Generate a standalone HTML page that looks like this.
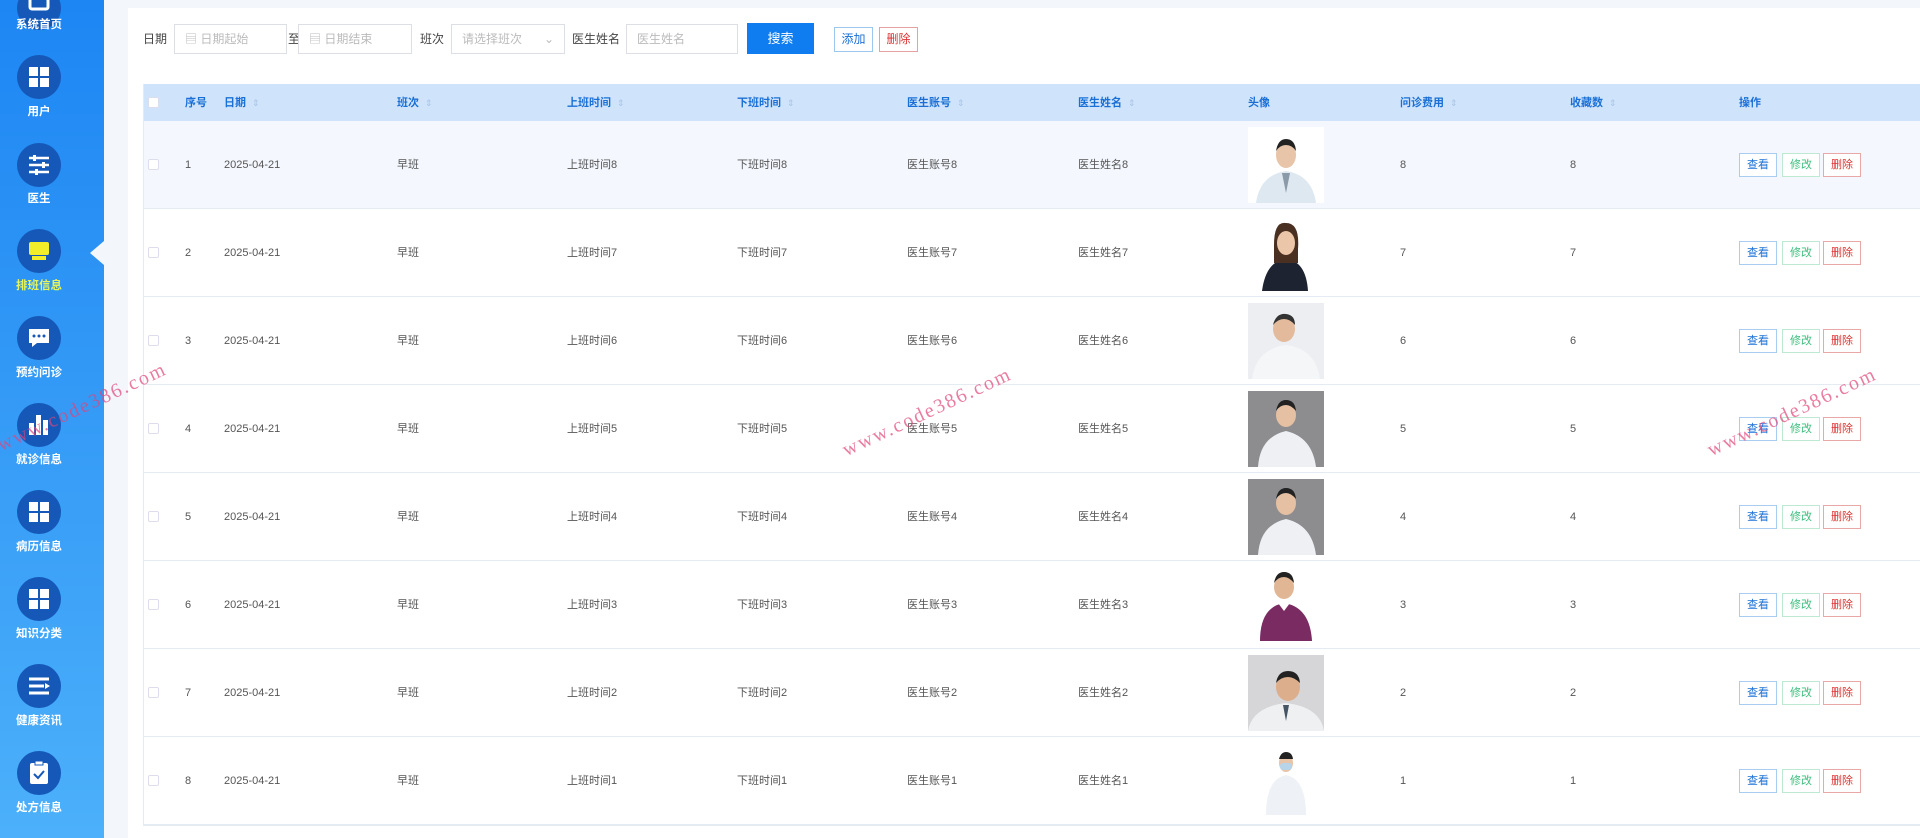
<!DOCTYPE html>
<html><head><meta charset="utf-8">
<style>
*{margin:0;padding:0;box-sizing:border-box}
body{width:1920px;height:838px;overflow:hidden;background:#f3f6fb;font-family:"Liberation Sans","Noto Sans CJK SC",sans-serif;font-size:12px;line-height:14px;color:#555;position:relative}
.side{position:absolute;left:0;top:0;width:104px;height:838px;background:linear-gradient(#1d86f3,#4cb0fa)}
.ic{position:absolute;left:17px;width:44px;height:44px;border-radius:50%;background:#1558b8}
.lb{position:absolute;left:0;width:78px;text-align:center;color:#fff;font-size:11.5px;font-weight:bold}
.notch{position:absolute;left:90px;top:241px;width:0;height:0;border-top:12px solid transparent;border-bottom:12px solid transparent;border-right:14px solid #f3f6fb}
.panel{position:absolute;left:128px;top:8px;width:1792px;height:830px;background:#fff}
.lab{position:absolute;top:32px;font-size:12px;color:#444}
.inp{position:absolute;top:24px;height:30px;border:1px solid #dcdfe6;color:#bbb;font-size:12px;line-height:28px;padding-left:10px;background:#fff}
.btn{position:absolute;font-size:12px;text-align:center}
.tbl{position:absolute;left:143px;top:84px;width:1777px;height:742px;border-left:1px solid #e4ebf3;border-bottom:1px solid #e4ebf3}
.hd{position:absolute;left:0;top:0;width:100%;height:37px;background:#cfe4fb}
.h{position:absolute;top:12px;color:#1a6fd6;font-weight:bold;font-size:11px;line-height:14px}
.h i{font-style:normal;color:#a9c4e4;font-weight:normal;margin-left:6px;font-size:9px}
.row{position:absolute;left:0;width:100%;height:88px;border-bottom:1px solid #e4ebf3;background:#fff}
.c{position:absolute;top:37px;font-size:11px;line-height:14px;color:#555}
.cb{position:absolute;left:4px;top:38px;width:11px;height:11px;border:1px solid #dde;background:#fff;border-radius:2px}
.ph{position:absolute;left:1104px;top:6px}
.ob{position:absolute;top:32px;width:38px;height:24px;border:1px solid #ccc;font-size:11px;line-height:22px;text-align:center;background:#fff}
.wm{position:absolute;color:#e0457a;font-family:"Liberation Serif",serif;font-size:20px;transform:rotate(-25deg);letter-spacing:2px;opacity:.7;white-space:nowrap}
</style></head><body>
<div class="side">
<div class="ic" style="top:-14px"><svg width="44" height="44"><rect x="13" y="11" width="18" height="12" rx="2" fill="none" stroke="#fff" stroke-width="3"/></svg></div><div class="lb" style="top:18px">系统首页</div>
<div class="ic" style="top:55px"><svg width="44" height="44"><rect x="12" y="12" width="9" height="9" fill="#fff"/><rect x="23" y="12" width="9" height="9" fill="#fff"/><rect x="12" y="23" width="9" height="9" fill="#fff"/><rect x="23" y="23" width="9" height="9" fill="#fff"/></svg></div><div class="lb" style="top:105px">用户</div>
<div class="ic" style="top:143px"><svg width="44" height="44"><g stroke="#fff" stroke-width="2.5"><line x1="12" y1="15" x2="32" y2="15"/><line x1="12" y1="22" x2="32" y2="22"/><line x1="12" y1="29" x2="32" y2="29"/></g><rect x="16" y="12" width="3" height="6" fill="#fff"/><rect x="25" y="19" width="3" height="6" fill="#fff"/><rect x="18" y="26" width="3" height="6" fill="#fff"/></svg></div><div class="lb" style="top:192px">医生</div>
<div class="ic" style="top:229px"><svg width="44" height="44"><rect x="12" y="13" width="20" height="13" rx="2" fill="#f2ef2a"/><rect x="15" y="27" width="14" height="4" fill="#f2ef2a"/></svg></div><div class="lb" style="top:279px;color:#e6f35a">排班信息</div>
<div class="ic" style="top:316px"><svg width="44" height="44"><path d="M12 13h20v14H20l-5 4v-4h-3z" fill="#fff"/><circle cx="17" cy="20" r="1.5" fill="#1558b8"/><circle cx="22" cy="20" r="1.5" fill="#1558b8"/><circle cx="27" cy="20" r="1.5" fill="#1558b8"/></svg></div><div class="lb" style="top:366px">预约问诊</div>
<div class="ic" style="top:403px"><svg width="44" height="44"><rect x="12" y="20" width="5" height="12" fill="#fff"/><rect x="19" y="12" width="5" height="20" fill="#fff"/><rect x="26" y="17" width="5" height="15" fill="#fff"/></svg></div><div class="lb" style="top:453px">就诊信息</div>
<div class="ic" style="top:490px"><svg width="44" height="44"><rect x="12" y="12" width="9" height="9" fill="#fff"/><rect x="23" y="12" width="9" height="9" fill="#fff"/><rect x="12" y="23" width="9" height="9" fill="#fff"/><rect x="23" y="23" width="9" height="9" fill="#fff"/></svg></div><div class="lb" style="top:540px">病历信息</div>
<div class="ic" style="top:577px"><svg width="44" height="44"><rect x="12" y="12" width="9" height="9" fill="#fff"/><rect x="23" y="12" width="9" height="9" fill="#fff"/><rect x="12" y="23" width="9" height="9" fill="#fff"/><rect x="23" y="23" width="9" height="9" fill="#fff"/></svg></div><div class="lb" style="top:627px">知识分类</div>
<div class="ic" style="top:664px"><svg width="44" height="44"><g stroke="#fff" stroke-width="3"><line x1="12" y1="15" x2="32" y2="15"/><line x1="12" y1="22" x2="27" y2="22"/><line x1="12" y1="29" x2="32" y2="29"/></g><path d="M28 19l5 3-5 3z" fill="#fff"/></svg></div><div class="lb" style="top:714px">健康资讯</div>
<div class="ic" style="top:751px"><svg width="44" height="44"><rect x="13" y="12" width="18" height="21" rx="2" fill="#fff"/><rect x="18" y="10" width="8" height="4" fill="#fff" stroke="#1558b8"/><path d="M17 23l4 4 6-7" stroke="#1558b8" stroke-width="2" fill="none"/></svg></div><div class="lb" style="top:801px">处方信息</div>
<div class="notch"></div>
</div>
<div class="panel"></div>
<div class="lab" style="left:143px">日期</div>
<div class="inp" style="left:174px;width:113px">▤ 日期起始</div>
<div class="lab" style="left:288px">至</div>
<div class="inp" style="left:298px;width:114px">▤ 日期结束</div>
<div class="lab" style="left:420px">班次</div>
<div class="inp" style="left:451px;width:114px">请选择班次<span style="position:absolute;right:10px">⌄</span></div>
<div class="lab" style="left:572px">医生姓名</div>
<div class="inp" style="left:626px;width:112px">医生姓名</div>
<div class="btn" style="left:747px;top:23px;width:67px;height:31px;background:#0f7df0;color:#fff;line-height:31px;font-size:13px">搜索</div>
<div class="btn" style="left:834px;top:27px;width:39px;height:25px;border:1px solid #9cc7ef;color:#1a6fd6;line-height:23px">添加</div>
<div class="btn" style="left:879px;top:27px;width:39px;height:25px;border:1px solid #e5a0a0;color:#d33;line-height:23px">删除</div>

<div class="tbl">
<div class="hd">
<div class="cb" style="top:13px"></div>
<div class="h" style="left:41px">序号</div>
<div class="h" style="left:80px">日期<i>⇕</i></div>
<div class="h" style="left:253px">班次<i>⇕</i></div>
<div class="h" style="left:423px">上班时间<i>⇕</i></div>
<div class="h" style="left:593px">下班时间<i>⇕</i></div>
<div class="h" style="left:763px">医生账号<i>⇕</i></div>
<div class="h" style="left:934px">医生姓名<i>⇕</i></div>
<div class="h" style="left:1104px">头像</div>
<div class="h" style="left:1256px">问诊费用<i>⇕</i></div>
<div class="h" style="left:1426px">收藏数<i>⇕</i></div>
<div class="h" style="left:1595px">操作</div>
</div>

<div class="row" style="top:37px;background:#f4f8fe"><div class="cb"></div><div class="c" style="left:41px">1</div><div class="c" style="left:80px">2025-04-21</div><div class="c" style="left:253px">早班</div><div class="c" style="left:423px">上班时间8</div><div class="c" style="left:593px">下班时间8</div><div class="c" style="left:763px">医生账号8</div><div class="c" style="left:934px">医生姓名8</div>
<svg class="ph" width="76" height="76"><rect width="76" height="76" fill="#fff"/><path d="M8 76 Q12 48 38 44 Q64 48 68 76z" fill="#dde8f1"/><path d="M34 46l4 20 4-20z" fill="#8a9aa8"/><ellipse cx="38" cy="28" rx="10" ry="13" fill="#e8c4a8"/><path d="M28 24 Q30 12 38 12 Q47 12 48 24 Q44 18 38 18 Q32 18 28 24z" fill="#222"/></svg>
<div class="c" style="left:1256px">8</div><div class="c" style="left:1426px">8</div>
<div class="ob" style="left:1595px;color:#1a6fd6;border-color:#a8cdf0">查看</div><div class="ob" style="left:1638px;color:#3cbf7c;border-color:#bde8d2">修改</div><div class="ob" style="left:1679px;color:#d33;border-color:#e8a8a8">删除</div></div>

<div class="row" style="top:125px"><div class="cb"></div><div class="c" style="left:41px">2</div><div class="c" style="left:80px">2025-04-21</div><div class="c" style="left:253px">早班</div><div class="c" style="left:423px">上班时间7</div><div class="c" style="left:593px">下班时间7</div><div class="c" style="left:763px">医生账号7</div><div class="c" style="left:934px">医生姓名7</div>
<svg class="ph" width="76" height="76"><rect width="76" height="76" fill="#fff"/><path d="M14 76 Q18 46 38 44 Q58 46 60 76z" fill="#1d2330"/><path d="M26 30 Q26 6 38 8 Q52 8 50 34 L50 48 L26 48z" fill="#4a3020"/><ellipse cx="38" cy="28" rx="9" ry="12" fill="#ecc6a8"/></svg>
<div class="c" style="left:1256px">7</div><div class="c" style="left:1426px">7</div>
<div class="ob" style="left:1595px;color:#1a6fd6;border-color:#a8cdf0">查看</div><div class="ob" style="left:1638px;color:#3cbf7c;border-color:#bde8d2">修改</div><div class="ob" style="left:1679px;color:#d33;border-color:#e8a8a8">删除</div></div>

<div class="row" style="top:213px"><div class="cb"></div><div class="c" style="left:41px">3</div><div class="c" style="left:80px">2025-04-21</div><div class="c" style="left:253px">早班</div><div class="c" style="left:423px">上班时间6</div><div class="c" style="left:593px">下班时间6</div><div class="c" style="left:763px">医生账号6</div><div class="c" style="left:934px">医生姓名6</div>
<svg class="ph" width="76" height="76"><rect width="76" height="76" fill="#eceef1"/><path d="M4 76 Q8 46 38 42 Q68 46 72 76z" fill="#f4f6f8"/><ellipse cx="36" cy="26" rx="11" ry="13" fill="#e3bb9c"/><path d="M25 22 Q28 10 38 11 Q47 12 47 22 Q42 16 36 16 Q30 16 25 22z" fill="#333"/></svg>
<div class="c" style="left:1256px">6</div><div class="c" style="left:1426px">6</div>
<div class="ob" style="left:1595px;color:#1a6fd6;border-color:#a8cdf0">查看</div><div class="ob" style="left:1638px;color:#3cbf7c;border-color:#bde8d2">修改</div><div class="ob" style="left:1679px;color:#d33;border-color:#e8a8a8">删除</div></div>

<div class="row" style="top:301px"><div class="cb"></div><div class="c" style="left:41px">4</div><div class="c" style="left:80px">2025-04-21</div><div class="c" style="left:253px">早班</div><div class="c" style="left:423px">上班时间5</div><div class="c" style="left:593px">下班时间5</div><div class="c" style="left:763px">医生账号5</div><div class="c" style="left:934px">医生姓名5</div>
<svg class="ph" width="76" height="76"><rect width="76" height="76" fill="#8d8d90"/><path d="M10 76 Q12 46 38 40 Q64 46 68 76z" fill="#eef0f3"/><ellipse cx="38" cy="24" rx="10" ry="12" fill="#e6c0a2"/><path d="M28 20 Q30 9 38 9 Q47 9 48 20 Q43 14 38 14 Q32 14 28 20z" fill="#222"/></svg>
<div class="c" style="left:1256px">5</div><div class="c" style="left:1426px">5</div>
<div class="ob" style="left:1595px;color:#1a6fd6;border-color:#a8cdf0">查看</div><div class="ob" style="left:1638px;color:#3cbf7c;border-color:#bde8d2">修改</div><div class="ob" style="left:1679px;color:#d33;border-color:#e8a8a8">删除</div></div>

<div class="row" style="top:389px"><div class="cb"></div><div class="c" style="left:41px">5</div><div class="c" style="left:80px">2025-04-21</div><div class="c" style="left:253px">早班</div><div class="c" style="left:423px">上班时间4</div><div class="c" style="left:593px">下班时间4</div><div class="c" style="left:763px">医生账号4</div><div class="c" style="left:934px">医生姓名4</div>
<svg class="ph" width="76" height="76"><rect width="76" height="76" fill="#8d8d90"/><path d="M10 76 Q12 46 38 40 Q64 46 68 76z" fill="#eef0f3"/><ellipse cx="38" cy="24" rx="10" ry="12" fill="#e6c0a2"/><path d="M28 20 Q30 9 38 9 Q47 9 48 20 Q43 14 38 14 Q32 14 28 20z" fill="#222"/></svg>
<div class="c" style="left:1256px">4</div><div class="c" style="left:1426px">4</div>
<div class="ob" style="left:1595px;color:#1a6fd6;border-color:#a8cdf0">查看</div><div class="ob" style="left:1638px;color:#3cbf7c;border-color:#bde8d2">修改</div><div class="ob" style="left:1679px;color:#d33;border-color:#e8a8a8">删除</div></div>

<div class="row" style="top:477px"><div class="cb"></div><div class="c" style="left:41px">6</div><div class="c" style="left:80px">2025-04-21</div><div class="c" style="left:253px">早班</div><div class="c" style="left:423px">上班时间3</div><div class="c" style="left:593px">下班时间3</div><div class="c" style="left:763px">医生账号3</div><div class="c" style="left:934px">医生姓名3</div>
<svg class="ph" width="76" height="76"><rect width="76" height="76" fill="#fff"/><path d="M12 74 Q12 40 36 36 Q62 40 64 74z" fill="#7a2c62"/><path d="M30 36l6 8 6-8z" fill="#fff"/><ellipse cx="36" cy="20" rx="10" ry="12" fill="#e0b694"/><path d="M26 16 Q28 5 36 5 Q45 5 46 16 Q41 10 36 10 Q30 10 26 16z" fill="#222"/></svg>
<div class="c" style="left:1256px">3</div><div class="c" style="left:1426px">3</div>
<div class="ob" style="left:1595px;color:#1a6fd6;border-color:#a8cdf0">查看</div><div class="ob" style="left:1638px;color:#3cbf7c;border-color:#bde8d2">修改</div><div class="ob" style="left:1679px;color:#d33;border-color:#e8a8a8">删除</div></div>

<div class="row" style="top:565px"><div class="cb"></div><div class="c" style="left:41px">7</div><div class="c" style="left:80px">2025-04-21</div><div class="c" style="left:253px">早班</div><div class="c" style="left:423px">上班时间2</div><div class="c" style="left:593px">下班时间2</div><div class="c" style="left:763px">医生账号2</div><div class="c" style="left:934px">医生姓名2</div>
<svg class="ph" width="76" height="76"><rect width="76" height="76" fill="#d6d6d8"/><path d="M0 76 Q4 52 38 48 Q72 52 76 76z" fill="#eef0f2"/><path d="M35 50l3 16 3-16z" fill="#445566"/><ellipse cx="40" cy="32" rx="12" ry="14" fill="#dcae8c"/><path d="M28 28 Q30 16 40 16 Q51 16 52 28 Q46 22 40 22 Q33 22 28 28z" fill="#222"/></svg>
<div class="c" style="left:1256px">2</div><div class="c" style="left:1426px">2</div>
<div class="ob" style="left:1595px;color:#1a6fd6;border-color:#a8cdf0">查看</div><div class="ob" style="left:1638px;color:#3cbf7c;border-color:#bde8d2">修改</div><div class="ob" style="left:1679px;color:#d33;border-color:#e8a8a8">删除</div></div>

<div class="row" style="top:653px"><div class="cb"></div><div class="c" style="left:41px">8</div><div class="c" style="left:80px">2025-04-21</div><div class="c" style="left:253px">早班</div><div class="c" style="left:423px">上班时间1</div><div class="c" style="left:593px">下班时间1</div><div class="c" style="left:763px">医生账号1</div><div class="c" style="left:934px">医生姓名1</div>
<svg class="ph" width="76" height="76"><rect width="76" height="76" fill="#fff"/><path d="M18 72 Q18 36 38 32 Q58 36 58 72z" fill="#eef2f6"/><ellipse cx="38" cy="20" rx="7" ry="9" fill="#e8c4a8"/><rect x="32" y="20" width="12" height="7" rx="3" fill="#b8d4e8"/><path d="M31 16 Q33 9 38 9 Q44 9 45 16z" fill="#222"/></svg>
<div class="c" style="left:1256px">1</div><div class="c" style="left:1426px">1</div>
<div class="ob" style="left:1595px;color:#1a6fd6;border-color:#a8cdf0">查看</div><div class="ob" style="left:1638px;color:#3cbf7c;border-color:#bde8d2">修改</div><div class="ob" style="left:1679px;color:#d33;border-color:#e8a8a8">删除</div></div>
</div>

<div class="wm" style="left:-10px;top:400px">www.code386.com</div>
<div class="wm" style="left:835px;top:405px">www.code386.com</div>
<div class="wm" style="left:1700px;top:405px">www.code386.com</div>
</body></html>
